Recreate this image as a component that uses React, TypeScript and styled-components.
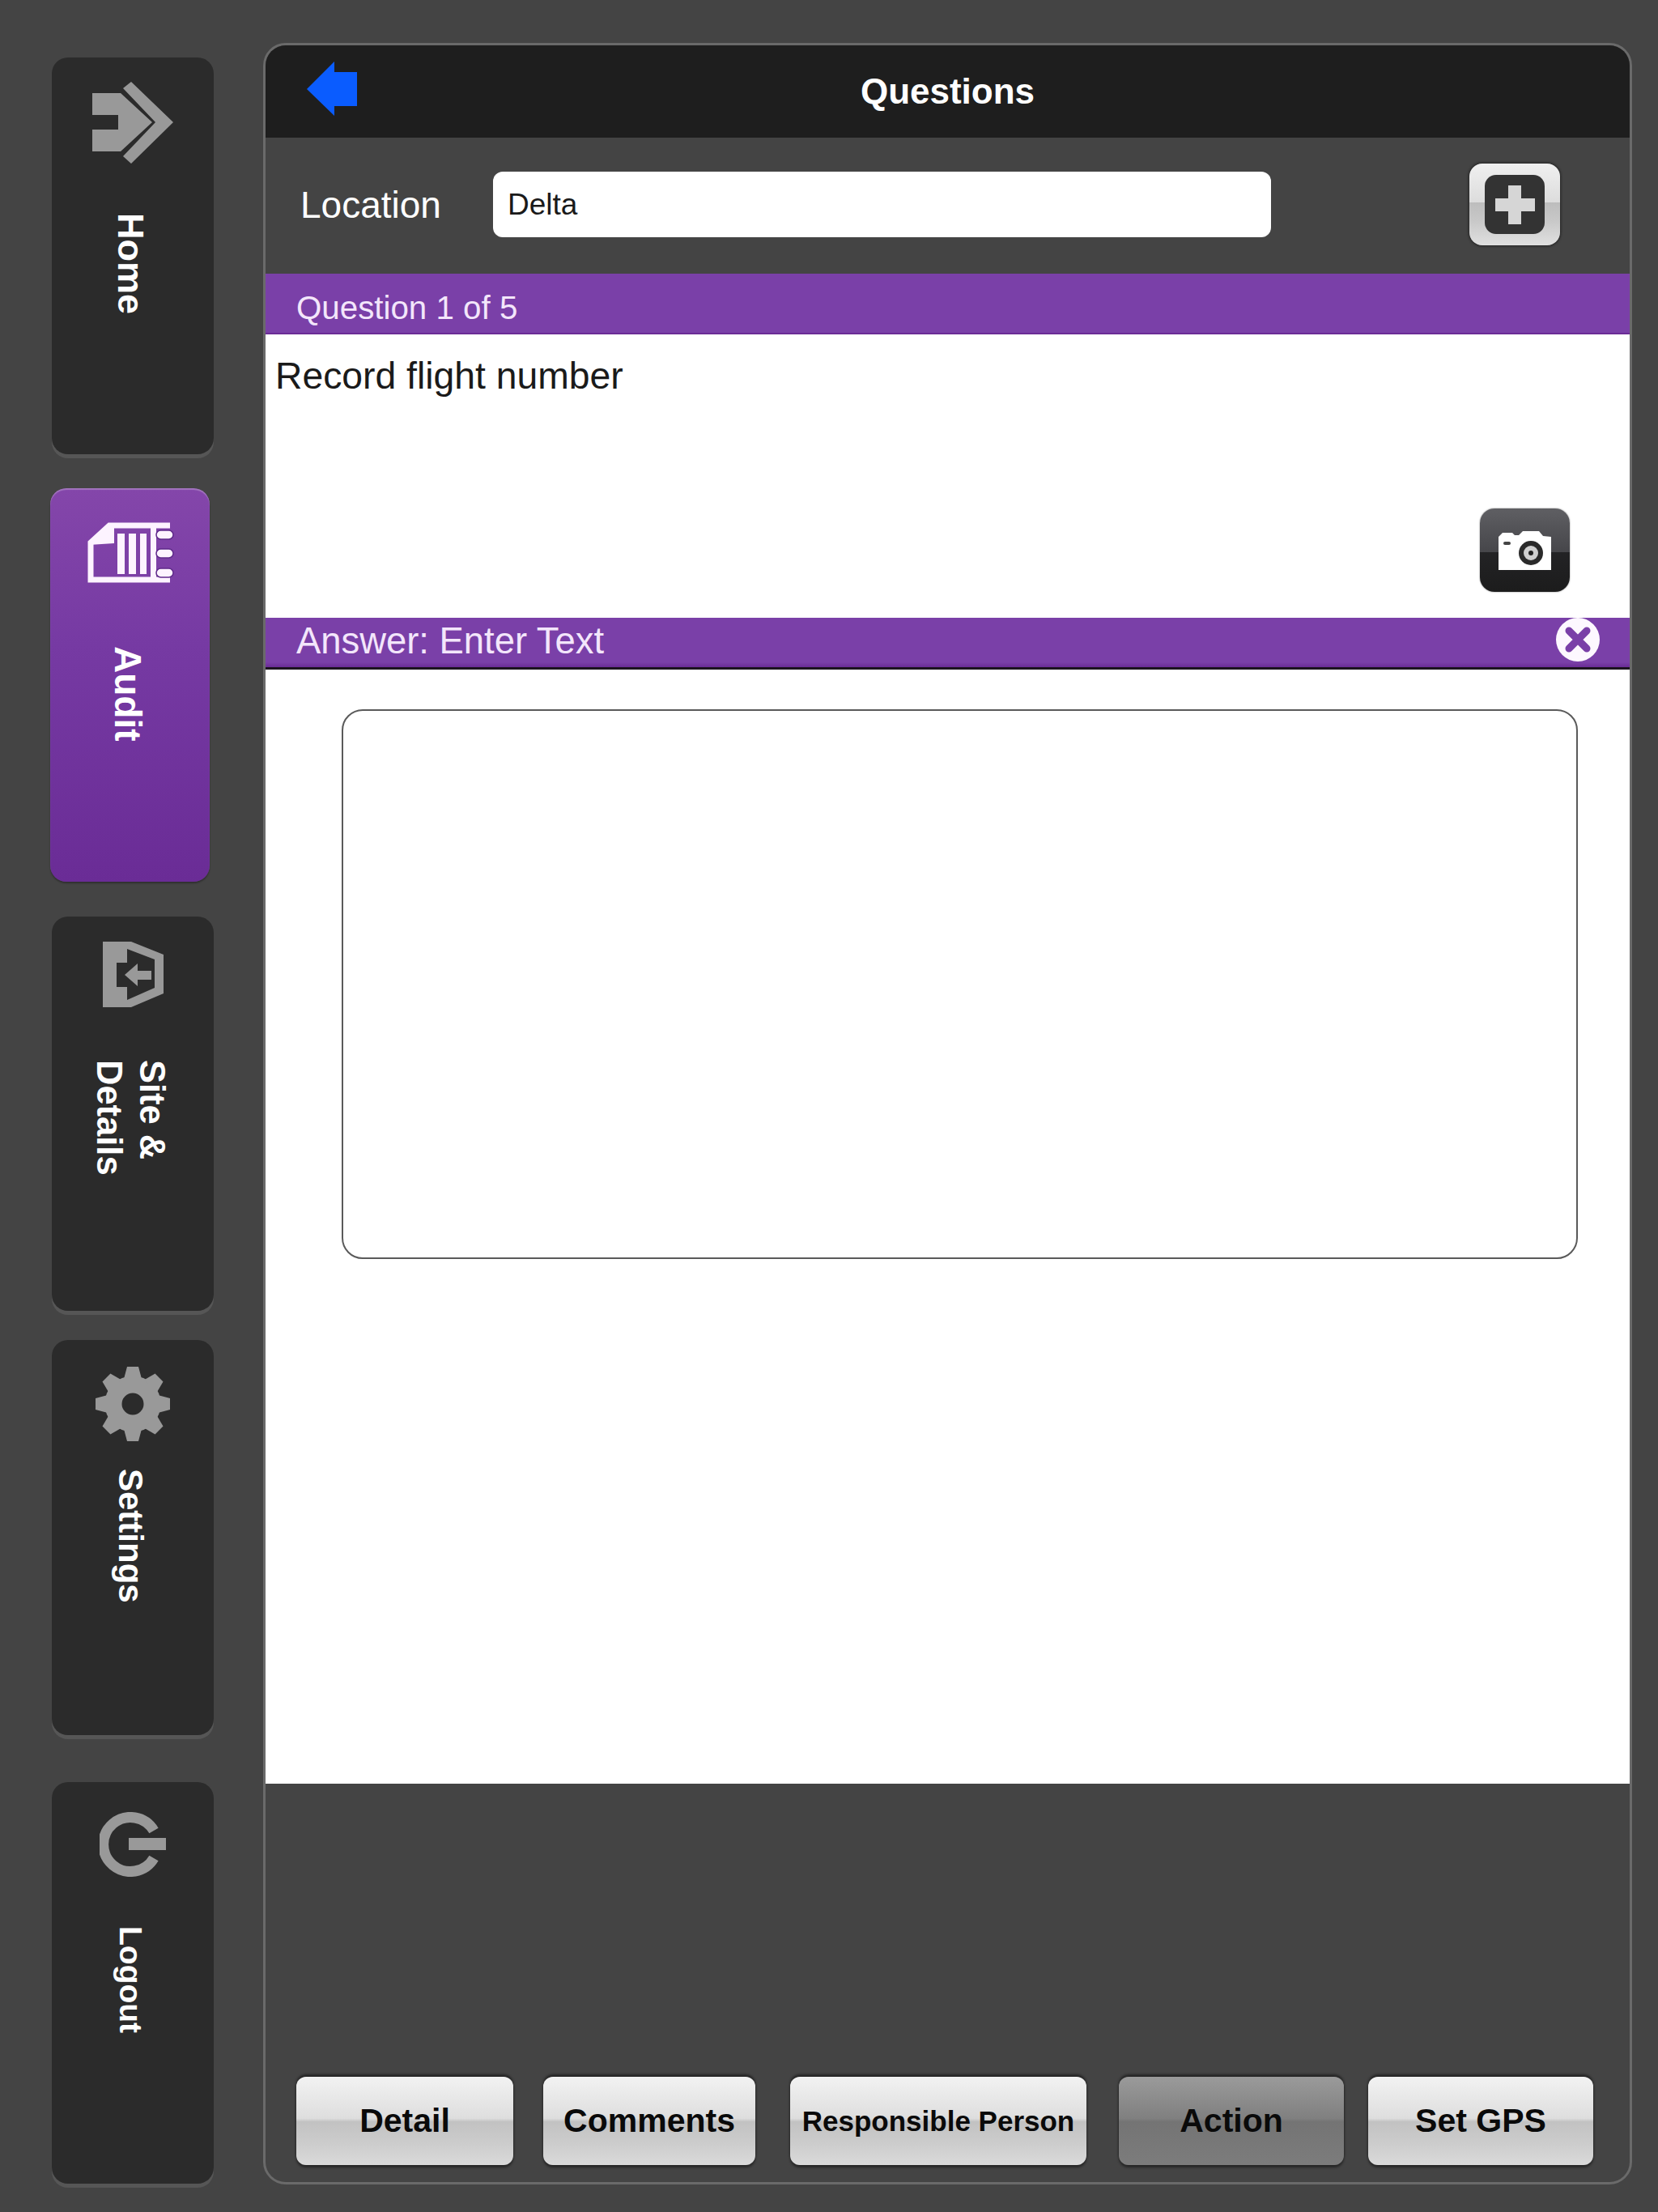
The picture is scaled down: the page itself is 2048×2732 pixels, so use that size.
import styled, { createGlobalStyle } from 'styled-components';

const GlobalStyle = createGlobalStyle`
	html, body {
		margin: 0;
		padding: 0;
		background: #444444;
		font-family: "Liberation Sans", Arial, sans-serif;
	}
	#root {
		width: 2048px;
		height: 2732px;
	}
`;

const Page = styled.div`
	display: flex;
	width: 2048px;
	height: 2732px;
	background: #444444;
	box-sizing: border-box;
	padding-top: 53px;
`;

const Sidebar = styled.nav`
	width: 325px;
	flex: none;
	display: flex;
	flex-direction: column;
	padding: 18px 0 0 62px;
	box-sizing: border-box;
`;

const Tab = styled.div<{ $active?: boolean; $height: number; $gap: number; $pad: number }>`
	display: flex;
	flex-direction: column;
	align-items: center;
	box-sizing: border-box;
	flex: none;
	width: ${(p) => (p.$active ? 197 : 200)}px;
	margin-left: ${(p) => (p.$active ? 0 : 2)}px;
	height: ${(p) => p.$height}px;
	margin-bottom: ${(p) => p.$gap}px;
	padding-top: ${(p) => p.$pad}px;
	border-radius: 20px;
	background: ${(p) =>
		p.$active ? 'linear-gradient(#8446aa, #763aa3 40%, #6a2c96)' : '#2b2b2b'};
	box-shadow: ${(p) =>
		p.$active
			? 'inset 0 2px 1px rgba(255,255,255,0.25), 0 2px 2px rgba(0,0,0,0.3)'
			: '0 5px 0 #565656'};
`;

const TabLabel = styled.span<{ $top: number; $size: number }>`
	writing-mode: vertical-rl;
	margin-top: ${(p) => p.$top}px;
	margin-right: 6px;
	color: #ffffff;
	font-size: ${(p) => p.$size}px;
	font-weight: 700;
	line-height: 53px;
	white-space: nowrap;
`;

const IconSvg = styled.svg`
	display: block;
	flex: none;
`;

const Panel = styled.main`
	flex: none;
	width: 1691px;
	height: 2645px;
	box-sizing: border-box;
	border: 3px solid #6a6a6a;
	border-radius: 28px;
	overflow: hidden;
	display: flex;
	flex-direction: column;
	background: #444444;
`;

const Header = styled.header`
	position: relative;
	flex: none;
	height: 114px;
	background: #1e1e1e;
	display: flex;
	align-items: center;
	justify-content: center;
`;

const BackButton = styled.button`
	position: absolute;
	left: 51px;
	top: 20px;
	padding: 0;
	border: none;
	background: none;
`;

const Title = styled.h1`
	margin: 0;
	color: #ffffff;
	font-size: 44px;
	font-weight: 700;
`;

const LocationRow = styled.div`
	flex: none;
	height: 168px;
	box-sizing: border-box;
	padding: 0 0 3px 43px;
	display: flex;
	align-items: center;
`;

const LocationLabel = styled.label`
	flex: none;
	width: 238px;
	color: #ffffff;
	font-size: 46px;
`;

const LocationField = styled.div`
	flex: none;
	width: 961px;
	height: 81px;
	box-sizing: border-box;
	padding-left: 18px;
	border-radius: 12px;
	background: #ffffff;
	color: #1a1a1a;
	font-size: 37px;
	line-height: 81px;
`;

const AddButton = styled.button`
	flex: none;
	width: 112px;
	height: 101px;
	margin-left: 245px;
	padding: 0;
	border: none;
	border-radius: 16px;
	background: linear-gradient(#f0f0f0, #dcdcdc 48%, #bdbdbd 48%, #c8c8c8 70%, #e0e0e0);
	box-shadow: 0 0 3px 1px #222222;
	display: flex;
	align-items: center;
	justify-content: center;
`;

const AddInner = styled.span`
	width: 74px;
	height: 73px;
	border-radius: 14px;
	background: #333333;
	display: flex;
	align-items: center;
	justify-content: center;
`;

const QuestionBar = styled.div`
	flex: none;
	height: 75px;
	box-sizing: border-box;
	padding-left: 38px;
	background: #7a40a8;
	border-bottom: 2px solid #6a2c96;
	color: #f3e6fb;
	font-size: 40.3px;
	line-height: 85px;
`;

const QuestionBody = styled.section`
	flex: none;
	height: 350px;
	box-sizing: border-box;
	padding: 23px 74px 32px 12px;
	background: #ffffff;
	display: flex;
	flex-direction: column;
`;

const QuestionText = styled.p`
	margin: 0;
	color: #1a1a1a;
	font-size: 46.3px;
	line-height: 56px;
`;

const CameraButton = styled.button`
	margin-top: auto;
	align-self: flex-end;
	width: 111px;
	height: 103px;
	padding: 0;
	border: none;
	border-radius: 18px;
	background: linear-gradient(#5f5f63, #46464a 52%, #232325 52%, #1c1c1c);
	box-shadow: 0 0 2px #777777;
	display: flex;
	align-items: center;
	justify-content: center;
`;

const AnswerBar = styled.div`
	flex: none;
	height: 64px;
	box-sizing: border-box;
	padding: 0 37px 0 38px;
	background: linear-gradient(#7a40a8, #7a40a8 90%, #6a2c96);
	border-bottom: 3px solid #1c1420;
	color: #f3e6fb;
	font-size: 45.4px;
	line-height: 58px;
	display: flex;
	justify-content: space-between;
`;

const ClearButton = styled.button`
	flex: none;
	width: 54px;
	height: 54px;
	padding: 0;
	border: none;
	background: none;
`;

const AnswerBody = styled.section`
	flex: none;
	height: 1376px;
	box-sizing: border-box;
	padding: 49px 64px 0 94px;
	background: #ffffff;
`;

const AnswerBox = styled.div`
	height: 679px;
	box-sizing: border-box;
	border: 2px solid #5a5a5a;
	border-radius: 26px;
	background: #ffffff;
`;

const Footer = styled.footer`
	flex: 1;
	box-sizing: border-box;
	padding: 0 0 21px 38px;
	display: flex;
	align-items: flex-end;
`;

const FooterButton = styled.button<{ $active?: boolean; $width: number; $gap?: number; $small?: boolean }>`
	flex: none;
	width: ${(p) => p.$width}px;
	height: 109px;
	margin-left: ${(p) => p.$gap ?? 0}px;
	padding: 0;
	border: none;
	border-radius: 12px;
	font-family: "Liberation Sans", Arial, sans-serif;
	font-weight: 700;
	font-size: ${(p) => (p.$small ? 35 : 41)}px;
	color: #0a0a0a;
	background: ${(p) =>
		p.$active
			? 'linear-gradient(#9a9a9a, #808080 47%, #747474 51%, #7c7c7c)'
			: 'linear-gradient(#f2f2f2, #dedede 47%, #c2c2c2 51%, #cccccc 75%, #dadada)'};
	box-shadow: 0 -3px 3px rgba(0, 0, 0, 0.45), 0 3px 3px rgba(0, 0, 0, 0.45);
`;

const iconGrey = '#999999';

const HomeIcon = () => (
	<IconSvg width="100" height="102" viewBox="0 0 100 102">
		<path fill={iconGrey} d="M0 15H35L74 51L35 87H0V60H32V42H0Z" />
		<path fill={iconGrey} d="M38 9L48 1L100 51L48 102L38 93L78 51Z" />
	</IconSvg>
);

const AuditIcon = () => (
	<IconSvg width="108" height="77" viewBox="0 0 108 77">
		<path fill="none" stroke="#fdf3ff" strokeWidth="7" d="M103 4H28L5 25V71H103" />
		<path fill="#fdf3ff" d="M28 2H34V26L3 28Z" />
		<rect fill="#fdf3ff" x="79" y="2" width="7" height="72" />
		<rect fill="#fdf3ff" x="38" y="14" width="9" height="50" />
		<rect fill="#fdf3ff" x="52" y="14" width="9" height="50" />
		<rect fill="#fdf3ff" x="66" y="14" width="8" height="50" />
		{[10, 33, 57].map((y) => (
			<rect key={y} x="86" y={y} width="21" height="11" rx="5.5" fill="#fdf3ff" stroke="#5f2a8a" strokeWidth="1.5" />
		))}
	</IconSvg>
);

const SiteIcon = () => (
	<IconSvg width="75" height="81" viewBox="0 0 75 81">
		<path
			fill={iconGrey}
			fillRule="evenodd"
			d="M0 0H35L75 16V64L35 81H0ZM30 9L64 22V57L30 72V56H17V26H30ZM27 41L43 27V36H60V47H43V55Z"
		/>
	</IconSvg>
);

const SettingsIcon = () => (
	<IconSvg width="94" height="94" viewBox="0 0 94 94">
		<circle cx="47" cy="47" r="24" fill="none" stroke={iconGrey} strokeWidth="21" />
		{[0, 45, 90, 135, 180, 225, 270, 315].map((deg) => (
			<path key={deg} fill={iconGrey} transform={`rotate(${deg} 47 47)`} d="M36 16L40 1H54L58 16Z" />
		))}
	</IconSvg>
);

const LogoutIcon = () => (
	<IconSvg width="83" height="80" viewBox="0 0 83 80">
		<path fill="none" stroke={iconGrey} strokeWidth="13" d="M67 23A33.5 33.5 0 1 0 67 57" />
		<rect x="35" y="31" width="48" height="17" fill={iconGrey} stroke="#2b2b2b" strokeWidth="2" />
	</IconSvg>
);

const BackIcon = () => (
	<svg width="62" height="67" viewBox="0 0 62 67" style={{ display: 'block' }}>
		<path fill="#0a5cff" d="M0 34L34 0V13H62V55H34V67Z" />
	</svg>
);

const PlusIcon = () => (
	<svg width="49" height="48" viewBox="0 0 49 48">
		<path fill="#d6d6d6" d="M16 0H32V16H49V32H32V48H16V32H0V16H16Z" />
	</svg>
);

const CameraIcon = () => (
	<svg width="65" height="48" viewBox="0 0 65 48">
		<path
			fill="#ffffff"
			d="M0 7L5 2H17L20 5H25L30 0H50L55 6L65 7V48H0Z"
		/>
		<rect x="6" y="13" width="9" height="4" rx="2" fill="#444444" />
		<circle cx="40" cy="27" r="15" fill="#2a2a2a" />
		<circle cx="40" cy="27" r="9" fill="#d0d0d0" />
		<circle cx="40" cy="27" r="3" fill="#222222" />
	</svg>
);

const ClearIcon = () => (
	<svg width="54" height="54" viewBox="0 0 54 54" style={{ display: 'block' }}>
		<circle cx="27" cy="27" r="27" fill="#fdf8ff" />
		<path d="M16 16L38 38M38 16L16 38" stroke="#7a40a8" strokeWidth="9" strokeLinecap="round" />
	</svg>
);

export default function App() {
	return (
		<>
			<GlobalStyle />
			<Page>
				<Sidebar>
					<Tab $height={490} $gap={42} $pad={29}>
						<HomeIcon />
						<TabLabel $top={61} $size={45}>Home</TabLabel>
					</Tab>
					<Tab $active $height={486} $gap={43} $pad={42}>
						<AuditIcon />
						<TabLabel $top={76} $size={46}>Audit</TabLabel>
					</Tab>
					<Tab $height={487} $gap={36} $pad={31}>
						<SiteIcon />
						<TabLabel $top={65} $size={43.5}>
							Site &amp;
							<br />
							Details
						</TabLabel>
					</Tab>
					<Tab $height={488} $gap={58} $pad={32}>
						<SettingsIcon />
						<TabLabel $top={33} $size={42}>Settings</TabLabel>
					</Tab>
					<Tab $height={496} $gap={0} $pad={37}>
						<LogoutIcon />
						<TabLabel $top={61} $size={39}>Logout</TabLabel>
					</Tab>
				</Sidebar>
				<Panel>
					<Header>
						<BackButton>
							<BackIcon />
						</BackButton>
						<Title>Questions</Title>
					</Header>
					<LocationRow>
						<LocationLabel>Location</LocationLabel>
						<LocationField>Delta</LocationField>
						<AddButton>
							<AddInner>
								<PlusIcon />
							</AddInner>
						</AddButton>
					</LocationRow>
					<QuestionBar>Question 1 of 5</QuestionBar>
					<QuestionBody>
						<QuestionText>Record flight number</QuestionText>
						<CameraButton>
							<CameraIcon />
						</CameraButton>
					</QuestionBody>
					<AnswerBar>
						Answer: Enter Text
						<ClearButton>
							<ClearIcon />
						</ClearButton>
					</AnswerBar>
					<AnswerBody>
						<AnswerBox />
					</AnswerBody>
					<Footer>
						<FooterButton $width={268}>Detail</FooterButton>
						<FooterButton $width={262} $gap={37}>Comments</FooterButton>
						<FooterButton $width={366} $gap={43} $small>Responsible Person</FooterButton>
						<FooterButton $width={278} $gap={40} $active>Action</FooterButton>
						<FooterButton $width={278} $gap={30}>Set GPS</FooterButton>
					</Footer>
				</Panel>
			</Page>
		</>
	);
}
